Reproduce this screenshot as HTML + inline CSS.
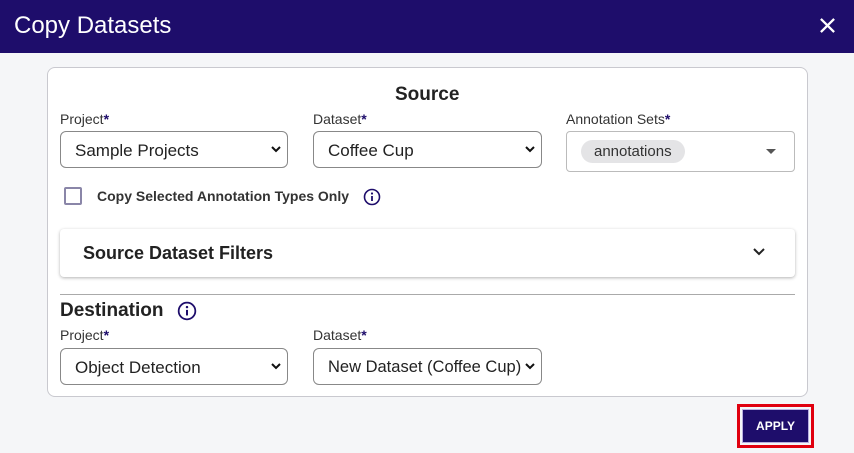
<!DOCTYPE html>
<html><head><style>
*{box-sizing:border-box;margin:0;padding:0}
body{width:854px;height:453px;background:#f5f6f8;font-family:"Liberation Sans",sans-serif;position:relative;overflow:hidden;color:#222}
.hdr{position:absolute;left:0;top:0;width:854px;height:53px;background:#1e0d6b;color:#fff}
.hdr .t{position:absolute;left:14px;top:12px;font-size:24px}
.hdr .x{position:absolute;right:18px;top:17px}
.card{position:absolute;left:47px;top:67px;width:761px;height:330px;background:#fff;border:1px solid #c9c9cf;border-radius:8px}
.a{position:absolute}
.lbl{font-size:14px;color:#333}
.lbl b{color:#1e0d6b}
.sel{position:absolute;height:37px;border:1px solid #888;border-radius:6px;background:#fff;font-size:17px;padding:9px 14px;color:#222;white-space:nowrap;overflow:hidden}
.sel svg{position:absolute;right:6px;top:14px}
</style></head><body>
<div class="hdr"><div class="t">Copy Datasets</div>
<svg class="x" width="17" height="17" viewBox="0 0 18 18"><path d="M2 2L16 16M16 2L2 16" stroke="#fff" stroke-width="2.4"/></svg></div>
<div class="card"></div>
<div class="a" style="left:395px;top:84px;font-size:19px;font-weight:bold">Source</div>
<div class="a lbl" style="left:60px;top:111px">Project<b>*</b></div>
<div class="a lbl" style="left:313px;top:111px">Dataset<b>*</b></div>
<div class="a lbl" style="left:566px;top:111px">Annotation Sets<b>*</b></div>
<div class="sel" style="left:60px;top:131px;width:228px">Sample Projects<svg width="10" height="7"><path d="M1 1L5 5L9 1" stroke="#111" stroke-width="2" fill="none"/></svg></div>
<div class="sel" style="left:313px;top:131px;width:229px">Coffee Cup<svg width="10" height="7"><path d="M1 1L5 5L9 1" stroke="#111" stroke-width="2" fill="none"/></svg></div>
<div class="sel" style="left:566px;top:131px;width:229px;height:41px;border-color:#bbb;border-radius:4px;padding:9px 14px">
<span style="background:#e4e4e6;border-radius:12px;padding:3px 13px;font-size:15px;color:#333">annotations</span>
<svg width="10" height="6" style="top:17px;right:18px"><path d="M0 0L10 0L5 5Z" fill="#555"/></svg></div>
<div class="a" style="left:64px;top:187px;width:18px;height:18px;border:2px solid #8a86a8;border-radius:2px"></div>
<div class="a" style="left:97px;top:188px;font-size:14px;font-weight:bold;color:#333">Copy Selected Annotation Types Only</div>
<svg class="a" style="left:363px;top:188px" width="18" height="18" viewBox="0 0 18 18"><circle cx="9" cy="9" r="7.5" fill="none" stroke="#1e0d6b" stroke-width="1.6"/><circle cx="9" cy="5.5" r="1.1" fill="#1e0d6b"/><path d="M9 8V13" stroke="#1e0d6b" stroke-width="1.8"/></svg>
<div class="a" style="left:60px;top:229px;width:735px;height:48px;background:#fff;border-radius:4px;box-shadow:0 1px 3px rgba(0,0,0,.3)"></div>
<div class="a" style="left:83px;top:243px;font-size:18px;font-weight:bold;color:#222">Source Dataset Filters</div>
<svg class="a" style="left:753px;top:248px" width="12" height="8"><path d="M1 1L6 6L11 1" stroke="#222" stroke-width="2" fill="none"/></svg>
<div class="a" style="left:60px;top:294px;width:735px;height:1px;background:#aaa"></div>
<div class="a" style="left:60px;top:300px;font-size:19px;font-weight:bold">Destination</div>
<svg class="a" style="left:177px;top:301px" width="20" height="20" viewBox="0 0 18 18"><circle cx="9" cy="9" r="7.5" fill="none" stroke="#1e0d6b" stroke-width="1.6"/><circle cx="9" cy="5.5" r="1.1" fill="#1e0d6b"/><path d="M9 8V13" stroke="#1e0d6b" stroke-width="1.8"/></svg>
<div class="a lbl" style="left:60px;top:327px">Project<b>*</b></div>
<div class="a lbl" style="left:313px;top:327px">Dataset<b>*</b></div>
<div class="sel" style="left:60px;top:348px;width:228px">Object Detection<svg width="10" height="7"><path d="M1 1L5 5L9 1" stroke="#111" stroke-width="2" fill="none"/></svg></div>
<div class="sel" style="left:313px;top:348px;width:229px;padding-left:14px;font-size:16.5px">New Dataset (Coffee Cup)<svg width="10" height="7" style="background:#fff"><path d="M1 1L5 5L9 1" stroke="#111" stroke-width="2" fill="none"/></svg></div>
<div class="a" style="left:737px;top:404px;width:77px;height:44px;border:3px solid #e0000f"></div>
<div class="a" style="left:742px;top:409px;width:67px;height:34px;background:#1e0d6b;border:1px solid #b9b0e0;color:#fff;font-size:12px;font-weight:bold;text-align:center;line-height:32px">APPLY</div>
</body></html>
